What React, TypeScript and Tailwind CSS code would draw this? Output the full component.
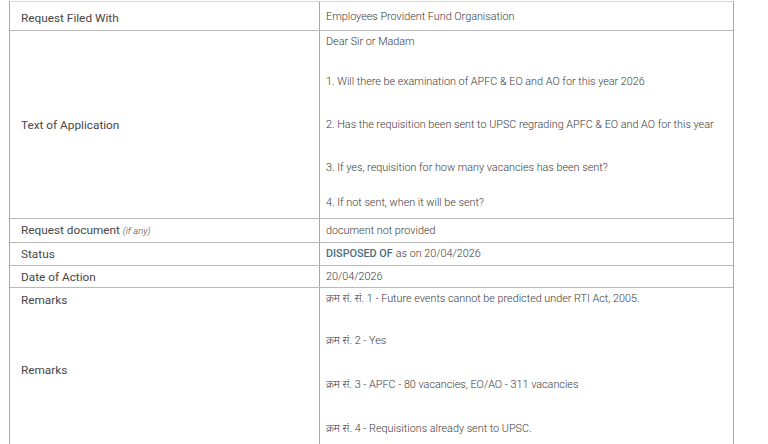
import React from 'react'

const labelCls = 'text-[11.8px] text-[#474747] leading-[14px]'
const valueCls = 'text-[10.8px] font-light text-[#3a3a3a] leading-[14px]'

function Row({
  label,
  children,
  height,
}: {
  label: React.ReactNode
  children: React.ReactNode
  height: string
}) {
  return (
    <div className={`grid grid-cols-[310px_414px] border-b border-[#b9b9b9] ${height}`}>
      <div className={`flex items-center border-r border-[#a8a8a8] pl-[11px] ${labelCls}`}>{label}</div>
      <div className={`flex items-center pl-[6px] ${valueCls}`}>{children}</div>
    </div>
  )
}

export default function App() {
  return (
    <div
      className="h-[444px] w-[768px] overflow-hidden bg-white"
      style={{ fontFamily: 'Roboto, "Noto Sans", "Noto Sans Devanagari", sans-serif' }}
    >
      <div className="ml-[9px] mt-[1px] w-[725px] border-x border-t border-x-[#a8a8a8] border-t-[#d8d8d8]">
        <Row label={<span className="mt-[3px]">Request Filed With</span>} height="h-[29px]">
          <span className="mt-[1px]">Employees Provident Fund Organisation</span>
        </Row>

        {/* Text of application */}
        <div className="grid h-[188px] grid-cols-[310px_414px] border-b border-[#b9b9b9]">
          <div className={`flex items-center border-r border-[#a8a8a8] pl-[11px] ${labelCls}`}>
            Text of Application
          </div>
          <div className={`pl-[6px] pt-[4px] ${valueCls}`}>
            <p>Dear Sir or Madam</p>
            <p className="mt-[26px]">1. Will there be examination of APFC &amp; EO and AO for this year 2026</p>
            <p className="mt-[29px]">
              2. Has the requisition been sent to UPSC regrading APFC &amp; EO and AO for this year
            </p>
            <p className="mt-[29px]">3. If yes, requisition for how many vacancies has been sent?</p>
            <p className="mt-[21px]">4. If not sent, when it will be sent?</p>
          </div>
        </div>

        <Row
          label={
            <span>
              Request document <i className="text-[9.5px] font-light text-[#444]">(if any)</i>
            </span>
          }
          height="h-[24px]"
        >
          document not provided
        </Row>
        <Row label="Status" height="h-[23px]">
          <span className="font-medium text-[#48707f]">DISPOSED OF</span>
          <span className="ml-[3px]">as on 20/04/2026</span>
        </Row>
        <Row label="Date of Action" height="h-[22px]">
          20/04/2026
        </Row>

        {/* Remarks */}
        <div className="grid h-[170px] grid-cols-[310px_414px]">
          <div className={`border-r border-[#a8a8a8] pl-[11px] pt-[5px] ${labelCls}`}>
            <p>Remarks</p>
            <p className="mt-[56px]">Remarks</p>
          </div>
          <div className={`pl-[6px] pt-[4px] ${valueCls}`}>
            <p>क्रम सं. सं. 1 - Future events cannot be predicted under RTI Act, 2005.</p>
            <p className="mt-[28px]">क्रम सं. 2 - Yes</p>
            <p className="mt-[30px]">क्रम सं. 3 - APFC - 80 vacancies, EO/AO - 311 vacancies</p>
            <p className="mt-[30px]">क्रम सं. 4 - Requisitions already sent to UPSC.</p>
          </div>
        </div>
      </div>
    </div>
  )
}
